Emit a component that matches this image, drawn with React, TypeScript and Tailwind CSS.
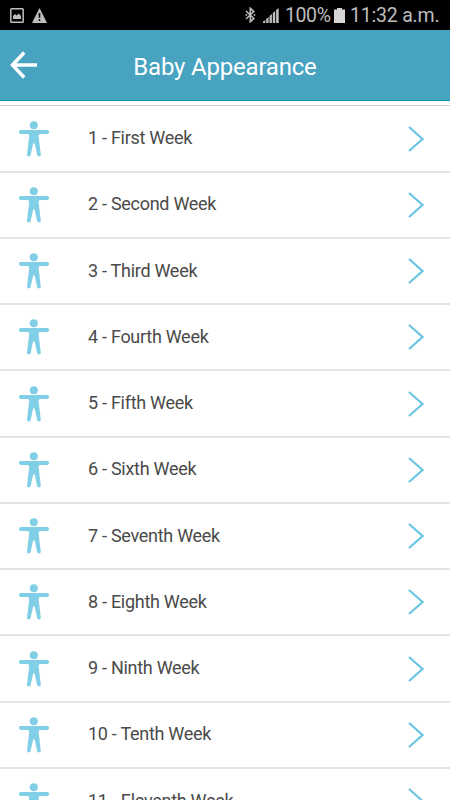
const weeks = [
  "First",
  "Second",
  "Third",
  "Fourth",
  "Fifth",
  "Sixth",
  "Seventh",
  "Eighth",
  "Ninth",
  "Tenth",
  "Eleventh",
];

function StatusBar() {
  return (
    <div className="flex h-[30px] shrink-0 items-center bg-black pl-2.5 text-[#bdbdbd]">
      <svg className="h-[15px] w-[14px] shrink-0" viewBox="0 0 14 15">
        <rect x="0.8" y="0.8" width="12.4" height="13.4" rx="0.8" fill="none" stroke="currentColor" strokeWidth="1.5" />
        <path d="M3 11V8l2-2 1.7 1.5L8.7 5.5 11 8v3z" fill="currentColor" />
      </svg>
      <svg className="ml-2 h-[15px] w-[15px] shrink-0" viewBox="0 0 15 15">
        <path d="M7.5 0 15 15H0z" fill="currentColor" />
        <path d="M6.7 5h1.6v4.8H6.7zM6.7 11.2h1.6v1.7H6.7z" fill="#000" />
      </svg>
      <svg className="ml-[198px] h-4 w-[11px] shrink-0" viewBox="0 0 11 16">
        <path d="M1 4 8.8 11.4 5.3 14.7V1.3L8.8 4.6 1 12" fill="none" stroke="currentColor" strokeWidth="1.6" />
        <circle cx="1.4" cy="8" r="0.9" fill="currentColor" />
        <circle cx="9.5" cy="8" r="0.9" fill="currentColor" />
      </svg>
      <svg className="ml-[7px] h-[15px] w-4 shrink-0" viewBox="0 0 16 15">
        <path d="M0 15v-1.5L2.3 12v3zM3.2 15v-4l2.4-2v6zM6.5 15V8l2.4-2v9zM9.8 15V5l2.4-2v12zM13.1 15V2L15.7 0v15z" fill="currentColor" />
      </svg>
      <span className="ml-1.5 w-[45px] pt-px text-[19.5px] leading-[30px] tracking-[-0.4px] whitespace-nowrap">100%</span>
      <svg className="ml-1 h-[15px] w-[11px] shrink-0" viewBox="0 0 11 15">
        <path d="M3 0h5v1.5h3V15H0V1.5h3z" fill="#d6d6d6" />
      </svg>
      <span className="ml-[5px] pt-px text-[19.5px] leading-[30px] tracking-[-0.2px] whitespace-nowrap">11:32 a.m.</span>
    </div>
  );
}

function Header() {
  return (
    <header className="relative flex h-[71px] shrink-0 items-center justify-center border-b border-[#0c9ab8] bg-[#47a3bf] pt-1">
      <svg className="absolute top-[21px] left-2.5 h-7 w-[27px]" viewBox="0 0 27 28" fill="none" stroke="#fff" strokeWidth="3.5">
        <path d="M14.2 1.5 2.5 14l11.7 12.5M2.5 14H27" />
      </svg>
      <h1 className="text-[24px] leading-8 tracking-[-0.2px] text-white">Baby Appearance</h1>
    </header>
  );
}

function PersonIcon() {
  return (
    <svg className="h-9 w-[30px] shrink-0 text-[#81cee7]" viewBox="0 0 30 36" fill="currentColor">
      <circle cx="14.8" cy="4.2" r="4" />
      <path d="M1.9 9.1h26.2a1.95 1.95 0 0 1 0 3.9h-6.6c-1.4 0-2 .9-1.9 2.2l2.2 18.2c.3 2.4-3.3 2.8-3.7.4l-2.2-10.4c-.3-1.6-1.7-1.6-2 0l-2.2 10.4c-.4 2.4-4 2-3.7-.4l2.200-18.200c.1-1.300-.5-2.200-1.900-2.200H1.900a1.950 1.950 0 0 1 0-3.900z" />
    </svg>
  );
}

function WeekRow({ label }: { label: string }) {
  return (
    <li className="flex h-[66.25px] shrink-0 items-center border-b-2 border-[#e4e4e4] pl-[19px]">
      <PersonIcon />
      <span className="ml-[39px] flex-1 pb-px text-[18px] leading-6 tracking-[-0.28px] text-[#4a4a4a]">{label}</span>
      <svg className="mr-[26px] h-[26px] w-4 shrink-0" viewBox="0 0 16 26" fill="none" stroke="#6cc5e2" strokeWidth="2.2">
        <path d="M1 1l13.5 12L1 25" />
      </svg>
    </li>
  );
}

export default function App() {
  return (
    <div className="flex h-[800px] w-[450px] flex-col overflow-hidden bg-white font-['Roboto',sans-serif]">
      <StatusBar />
      <Header />
      <ul className="mt-[4.4px] flex flex-col border-t border-[#d0d0d0]">
        {weeks.map((week, i) => (
          <WeekRow key={week} label={`${i + 1} - ${week} Week`} />
        ))}
      </ul>
    </div>
  );
}
